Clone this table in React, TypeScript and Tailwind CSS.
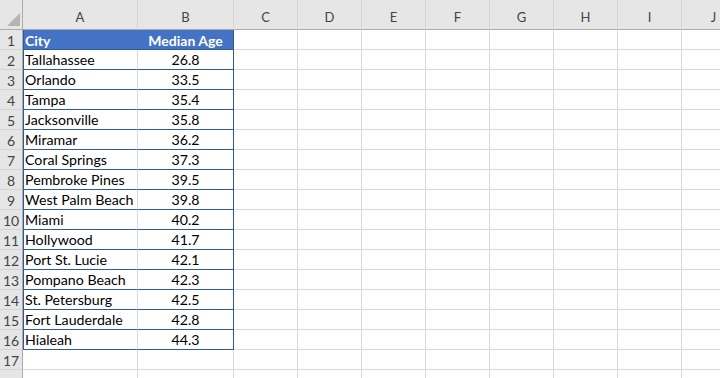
const rows: [string, string][] = [
  ["Tallahassee", "26.8"],
  ["Orlando", "33.5"],
  ["Tampa", "35.4"],
  ["Jacksonville", "35.8"],
  ["Miramar", "36.2"],
  ["Coral Springs", "37.3"],
  ["Pembroke Pines", "39.5"],
  ["West Palm Beach", "39.8"],
  ["Miami", "40.2"],
  ["Hollywood", "41.7"],
  ["Port St. Lucie", "42.1"],
  ["Pompano Beach", "42.3"],
  ["St. Petersburg", "42.5"],
  ["Fort Lauderdale", "42.8"],
  ["Hialeah", "44.3"],
];

const extraCols = ["C", "D", "E", "F", "G", "H", "I", "J"];

const colHead =
  "flex h-[30px] items-end justify-center border-r border-b border-r-[#d4d4d4] border-b-[#ababab] bg-[#e6e6e6] pb-[2px] text-[13px] text-[#444]";
const rowHead =
  "flex h-[20px] items-center justify-center border-r border-b border-r-[#ababab] border-b-[#d4d4d4] bg-[#e6e6e6] pt-[1px] text-[14px] text-[#444]";
const blank = "h-[20px] border-r border-b border-[#d9d9d9]";

function EmptyCells() {
  return (
    <>
      {extraCols.map((c) => (
        <div key={c} className={blank} />
      ))}
    </>
  );
}

export default function App() {
  return (
    <div
      className="h-[378px] w-[720px] overflow-hidden bg-white"
      style={{ fontFamily: "Lato, 'Open Sans', sans-serif" }}
    >
      <div className="grid grid-cols-[23px_115px_96px_repeat(8,64px)]">
        <div className="relative h-[30px] border-r border-b border-r-[#ababab] border-b-[#ababab] bg-[#e6e6e6]">
          <svg className="absolute left-[7px] top-[13px]" width="13" height="13" viewBox="0 0 13 13">
            <polygon points="13,0 13,13 0,13" fill="#b4b4b4" />
          </svg>
        </div>
        <div className={colHead}>A</div>
        <div className={colHead}>B</div>
        {extraCols.map((c) => (
          <div key={c} className={colHead}>
            {c}
          </div>
        ))}

        <div className={rowHead}>1</div>
        <div className="flex h-[20px] items-center whitespace-nowrap border-b border-l border-[#2f5c8f] bg-[#4472c4] pl-[1px] pt-[1px] text-[14px] font-bold text-white">
          City
        </div>
        <div className="flex h-[20px] items-center justify-center whitespace-nowrap border-r border-b border-[#2f5c8f] bg-[#4472c4] pt-[1px] text-[14px] font-bold text-white">
          Median Age
        </div>
        <EmptyCells />

        {rows.map(([city, age], i) => (
          <div key={city} className="contents">
            <div className={rowHead}>{i + 2}</div>
            <div className="flex h-[20px] items-center whitespace-nowrap border-b border-l border-r border-b-[#2f5c8f] border-l-[#2f5c8f] border-r-[#d9d9d9] pl-[1px] pt-[1px] text-[14.2px] text-black">
              {city}
            </div>
            <div className="flex h-[20px] items-center justify-center border-b border-r border-[#2f5c8f] pt-[1px] text-[14.2px] text-black">
              {age}
            </div>
            <EmptyCells />
          </div>
        ))}

        <div className={rowHead}>17</div>
        <div className={blank} />
        <div className={blank} />
        <EmptyCells />

        <div className={rowHead} />
        <div className={blank} />
        <div className={blank} />
        <EmptyCells />
      </div>
    </div>
  );
}
